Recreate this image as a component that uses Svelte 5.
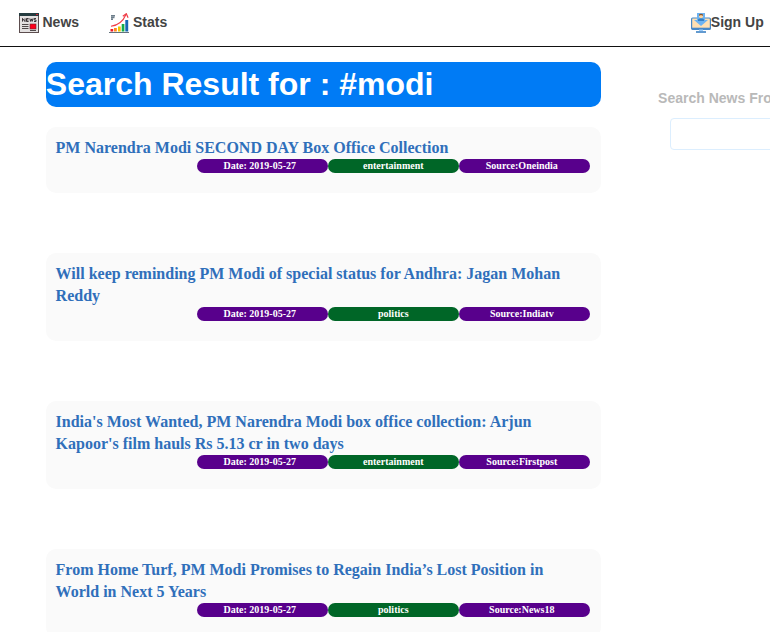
<script>
  const results = [
    { title: 'PM Narendra Modi SECOND DAY Box Office Collection', date: '2019-05-27', topic: 'entertainment', source: 'Oneindia' },
    { title: 'Will keep reminding PM Modi of special status for Andhra: Jagan Mohan Reddy', date: '2019-05-27', topic: 'politics', source: 'Indiatv' },
    { title: "India's Most Wanted, PM Narendra Modi box office collection: Arjun Kapoor's film hauls Rs 5.13 cr in two days", date: '2019-05-27', topic: 'entertainment', source: 'Firstpost' },
    { title: 'From Home Turf, PM Modi Promises to Regain India’s Lost Position in World in Next 5 Years', date: '2019-05-27', topic: 'politics', source: 'News18' }
  ];
</script>

<div class="page">
  <header>
    <a class="link news" href="#news">
      <svg width="20" height="20" viewBox="0 0 20 20">
        <rect width="20" height="20" fill="#5c4d4e" />
        <rect x="1" y="3" width="18" height="16" fill="#e4e1e1" />
        <rect width="20" height="3" fill="#253c40" />
        <rect x="17" y="1" width="2" height="1" fill="#d32538" />
        <path d="M3.5 8.6V5.4L6 8.6V5.4M9.6 5.5H7.5v3h2.1M7.5 7h2M10.8 5.4l.8 3 .8-2.5.8 2.5.8-3M17 5.5h-1.8V7H17v1.5h-2" fill="none" stroke="#292326" stroke-width=".9" />
        <path d="M3 11.5h6.5M3 13.5h6.5M3 15.5h6.5M11 17.5h6" stroke="#50494a" stroke-width="1" />
        <rect x="11" y="11" width="6" height="5" fill="#ff001b" stroke="#6b2431" stroke-width=".6" />
      </svg>
      <span>News</span>
    </a>
    <a class="link stats" href="#stats">
      <svg width="20" height="20" viewBox="0 0 20 20">
        <path d="M2 2.7h4M2 4.5h3.5M2 6.3h2" stroke="#6d7e8b" stroke-width="1.4" />
        <rect x="1.5" y="16" width="2.7" height="2.5" fill="#f01824" />
        <rect x="5" y="15" width="2.8" height="3.5" fill="#ff8b20" />
        <rect x="9" y="13.5" width="2.7" height="5" fill="#f2c500" />
        <rect x="12.7" y="11" width="2.7" height="7.5" fill="#12ad4b" />
        <rect x="16.3" y="7" width="2.9" height="11.5" fill="#1767b5" />
        <path d="M2 13.3C8 12.5 14 8.5 17 1.5" fill="none" stroke="#ef3b45" stroke-width="1.1" />
        <path d="M13.8 3.3l3.5-2.6 1.8 4" fill="none" stroke="#ef3b45" stroke-width="1.2" />
        <path d="M0 19.5h20" stroke="#64737d" stroke-width="1" />
      </svg>
      <span>Stats</span>
    </a>
    <a class="link signup" href="#signup">
      <svg width="20" height="20" viewBox="0 0 20 20">
        <rect x=".6" y="5" width="18.8" height="11.4" rx="1" fill="#ffe0b2" stroke="#4788c7" stroke-width="1.2" />
        <path d="M1 14.7h18v1.8H1z" fill="#4788c7" />
        <path d="M8 16.5h4V18H8z" fill="#98ccfd" />
        <path d="M5 19h10" stroke="#4788c7" stroke-width="1.7" />
        <path d="M6 0h8v7h3l-7 6-7-6h3z" fill="#6cb3f2" />
        <path d="M7 8V7q0-1.7 3-1.7T13 7v1z" fill="#347fc4" />
        <circle cx="10" cy="3.2" r="2" fill="#ffd39b" />
        <path d="M8 3V1.5Q10-.2 12 1.5V3l-1-.8H9z" fill="#8a552c" />
      </svg>
      <span>Sign Up</span>
    </a>
  </header>

  <div class="body">
    <main>
      <h1>Search Result for : #modi</h1>
      {#each results as item}
        <article>
          <h2>{item.title}</h2>
          <div class="tags">
            <span>Date: {item.date}</span>
            <span class="topic">{item.topic}</span>
            <span>Source:{item.source}</span>
          </div>
        </article>
      {/each}
    </main>
    <aside>
      <label for="search">Search News From Here</label>
      <input id="search" type="text" />
    </aside>
  </div>
</div>

<style>
  :global(body) {
    margin: 0;
    background: #fff;
  }
  .page {
    height: 632px;
    overflow: hidden;
    font-family: 'Liberation Sans', Arial, sans-serif;
  }
  header {
    box-sizing: border-box;
    display: flex;
    align-items: flex-start;
    height: 47px;
    padding: 13px 6.3px 0 19px;
    border-bottom: 1px solid #111;
  }
  .link {
    display: flex;
    color: #444;
    font-size: 14px;
    font-weight: bold;
    line-height: 18px;
    text-decoration: none;
    white-space: nowrap;
  }
  .link svg {
    flex: none;
  }
  .news {
    gap: 3.5px;
    margin-right: 30px;
  }
  .stats {
    gap: 3.9px;
  }
  .signup {
    margin-left: auto;
  }
  .body {
    display: flex;
    align-items: flex-start;
    padding: 15px 0 0 45.8px;
  }
  main {
    flex: none;
    width: 555px;
  }
  h1 {
    height: 45px;
    margin: 0 0 20px;
    border-radius: 10px;
    background: #007bf5;
    color: #fff;
    font-size: 32px;
    line-height: 45px;
  }
  article {
    margin-bottom: 60px;
    padding: 10px 11px 20px 9.8px;
    border-radius: 10px;
    background: #fafafa;
    font-family: 'Liberation Serif', 'Times New Roman', serif;
  }
  h2 {
    margin: 0;
    color: #2f6fba;
    font-size: 16px;
    line-height: 22px;
  }
  .tags {
    display: flex;
    justify-content: flex-end;
  }
  .tags span {
    box-sizing: border-box;
    width: 131px;
    height: 14px;
    padding-right: 5px;
    border-radius: 7px;
    background: #58008c;
    color: #fff;
    font-size: 10px;
    font-weight: bold;
    line-height: 14px;
    text-align: center;
  }
  .tags .topic {
    padding-right: 0;
    background: #006627;
  }
  aside {
    flex: none;
    width: 220px;
    margin-left: 57.3px;
    padding-top: 28px;
  }
  label {
    display: block;
    color: #b9b9b9;
    font-size: 14px;
    font-weight: bold;
    line-height: 16px;
    white-space: nowrap;
  }
  input {
    box-sizing: border-box;
    display: block;
    width: 200px;
    height: 32px;
    margin: 12px 0 0 12px;
    border: 1px solid #dceefe;
    border-radius: 4px;
    background: #fff;
  }
</style>
